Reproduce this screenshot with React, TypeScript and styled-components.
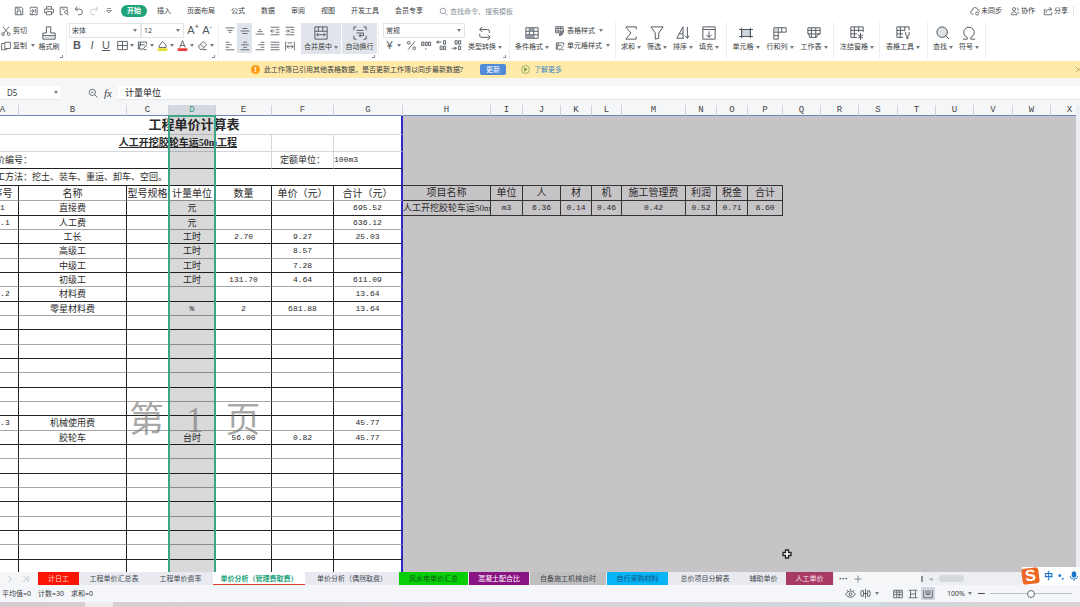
import React from 'react';
import styled, { createGlobalStyle, css } from 'styled-components';

const GlobalStyle = createGlobalStyle`
  * { box-sizing: border-box; }
  body {
    margin: 0;
    overflow: hidden;
    font: 7px/10px "Noto Sans", "Noto Sans CJK SC", sans-serif;
    color: #3a3d42;
    background: #f4f6f8;
  }
  button, input, select { font: inherit; color: inherit; }
  button { border: 0; padding: 0; margin: 0; background: none; white-space: nowrap; }
`;

/* ---------- icons ---------- */

const paths: Record<string, React.ReactNode> = {
  save: <path d="M2 2h10l2 2v10H2zM5 14V8h6v6M5 2v3h5" />,
  exportDoc: <path d="M2 5V2h11v12H5M1 8h7M5 5l3 3-3 3v3H2v-3M10 5v6" />,
  print: <path d="M4 5V1h8v4M4 11H1V5h14v6h-3M4 9h8v5H4z" />,
  preview: <path d="M6 14H2V2h11v5M5 5h4M9 10a2.500 2.500 0 1 0 5 0a2.500 2.500 0 1 0-5 0M13 12l2 3" />,
  undo: <path d="M5 1L2 5l4 3M2 5h7a4.500 4.500 0 0 1 0 9H6" />,
  redo: <path d="M11 1l3 4-4 3M14 5H7a4.500 4.500 0 0 0 0 9h3" />,
  more: <path d="M4 3h8M3 7h10l-5 5z" />,
  search: <path d="M2 7a5 5 0 1 0 10 0a5 5 0 1 0-10 0M11 11l4 4" />,
  find: <><circle cx="7" cy="7" r="6" fill="#dde1e5" /><path d="M11 11l4 4" /></>,
  zoomOut: <path d="M2 7a5 5 0 1 0 10 0a5 5 0 1 0-10 0M11 11l4 4M5 7h4" />,
  cloud: <path d="M6 13H4a3 3 0 0 1 0-6a4 4 0 0 1 8-1a3 3 0 0 1 3 3M9 12a2.500 2.500 0 1 0 5 0a2.500 2.500 0 1 0-5 0" />,
  people: <path d="M4 5a2.500 2.500 0 1 0 5 0a2.500 2.500 0 1 0-5 0M2 14c0-6 9-6 9 0zM11 3c3 1 3 4 1 5M12 11h3" />,
  share: <path d="M5 6H2v8h12v-4M5 11c0-5 3-6 8-6M10 2l4 3-4 3" />,
  cut: <path d="M3 1l8 10M13 1L5 11M1 13a2.200 2.200 0 1 0 4.400 0a2.200 2.200 0 1 0-4.400 0M10 13a2.200 2.200 0 1 0 4.400 0a2.200 2.200 0 1 0-4.400 0" />,
  copy: <path d="M6 2h9v10H6zM6 4H1v10h8v-2" />,
  painter: <><path d="M5 8V1h5v7h5v7H1V8zM1 11h14" /><path d="M2 12h12v2H2z" fill="#d5dade" stroke="none" /></>,
  borders: <path d="M1 2h14v12H1zM8 2v12M1 8h14" />,
  cellStyle: <path d="M8 13H2V3h12v3M2 7h9M5 3v4l-2 6M14 7l-5 6-2 2M10 14h4" />,
  fill: <><path d="M3 9l5-7 5 5v4H3z" /><path d="M1 12h14v4H1z" fill="#e6e02c" stroke="none" /></>,
  fontColor: <><path d="M4 11L8 1l4 10M5 8h6" /><path d="M1 12h14v4H1z" fill="#ee3b30" stroke="none" /></>,
  eraser: <path d="M2 9l7-7 5 5-7 7H5zM5 6l5 5M8 14h6" />,
  alignTop: <path d="M1 3h14M4 7h8M6 10h4" />,
  alignMiddle: <path d="M4 4h8M1 8h14M4 12h8" />,
  alignBottom: <path d="M6 6h4M4 9h8M1 13h14" />,
  indentLess: <path d="M1 2h14M9 6h6M9 10h6M1 14h14M7 8H1M4 5L1 8l3 3" />,
  indentMore: <path d="M1 2h14M9 6h6M9 10h6M1 14h14M1 8h6M4 5l3 3-3 3" />,
  left: <path d="M1 2h6M1 6h10M1 10h6M1 14h14" />,
  center: <path d="M5 2h6M2 6h12M5 10h6M1 14h14" />,
  right: <path d="M9 2h6M5 6h10M9 10h6M1 14h14" />,
  justify: <path d="M1 2h14M1 6h14M1 10h14M1 14h14" />,
  distribute: <path d="M1 1v14M15 1v14M4 3h8M3 9h10M6 6L3 9l3 3M10 6l3 3-3 3" />,
  merge: <path d="M1 1h14v14H1zM1 6h14M5 1v5M10 1v5M3 10h10M5 8l-2 2 2 2M11 8l2 2-2 2" />,
  wrap: <path d="M4 1H1v4M12 1h3v4M1 11v4h3M15 11v4h-3M4 5h8M4 8h8v3H7M9 9l-2 2 2 2" />,
  percent: <path d="M13 2L3 14M2 4a2 2 0 1 0 4 0a2 2 0 1 0-4 0M10 12a2 2 0 1 0 4 0a2 2 0 1 0-4 0" />,
  thousands: <path d="M1 3h3v5H1zM6 3h3v5H6zM11 3h3v5h-3zM7 12v2" />,
  decMore: <path d="M8 3H1M4 1L1 3l3 2M11 1h3v5h-3zM6 9h3v5H6zM11 9h3v5h-3z" />,
  decLess: <path d="M6 1h3v5H6zM11 1h3v5h-3zM11 9h3v5h-3zM1 12h7M5 10l3 2-3 2" />,
  convert: <path d="M5 1L2 4l3 3M2 4h9a2 2 0 0 1 2 2v2M2 9v2a2 2 0 0 0 2 2h9M11 10l3 3-3 3" />,
  conditional: <><path d="M1 2h14v12H1zM1 6h14M1 10h14M5 2v12M10 2v12" /><path d="M5 2h5v4H5zM1 10h9v4H1z" fill="#8f98a3" stroke="none" /></>,
  tableStyle: <><path d="M1 1h12v6M1 1v10h5M1 4h12M1 8h7M5 1v10M9 1v6" /><path d="M8 9l6-2-2 6-5 3z" fill="#7c858f" /></>,
  sum: <path d="M14 4V1H2l6 7-6 7h12v-3" />,
  filter: <path d="M1 1h14l-5 7v6l-4 1V8z" />,
  sort: <path d="M1 14L8 1v13M4 9h4M1 14h8M13 1v13M10 11l3 3 2-3" />,
  fillDown: <path d="M1 1h14v14H1zM1 4h14M8 6v7M5 10l3 3 3-3" />,
  cell: <><path d="M3 4h10v8H3z" fill="#d2d8df" /><path d="M3 2v12M13 2v12M0 4h16M0 12h16" /></>,
  rowcol: <><path d="M1 2h14v5H6v8H1zM6 2v5M10 2v5M1 7h5M1 11h5" /><path d="M2 3h3v3H2z" fill="#c9d0d7" stroke="none" /></>,
  sheet: <path d="M1 2h14v7l-3 1-1 3H3L2 9H1zM1 5h14M1 9h14M5 2v11M10 2v11" />,
  freeze: <><path d="M8 13H1V1h14v6M1 5h14M1 9h7M5 1v12M10 1v6" /><path d="M12 8v8M9 10l6 4M15 10l-6 4" /></>,
  tableTool: <path d="M8 13H1V1h14v4M1 5h9M1 9h7M5 1v12M10 1v5M11 7v3l1.500 1V15M15 7v3l-1.500 1V15" />,
  omega: <path d="M1 15h5v-2a6 6 0 1 1 4 0v2h5" />,
  play: <><circle cx="8" cy="8" r="7" /><path d="M6 5l5 3-5 3z" fill="#6bb34d" /></>,
  close: <path d="M2 2l12 12M14 2L2 14" />,
  next: <path d="M5 2l6 6-6 6" />,
  last: <path d="M3 2l6 6-6 6M12 2v12" />,
  plus: <path d="M8 1v14M1 8h14" />,
  eye: <path d="M1 9c4-6 10-6 14 0c-4 6-10 6-14 0M6 9a2 2 0 1 0 4 0a2 2 0 1 0-4 0M8 1v2M3 3l1 2M13 3l-1 2" />,
  move: <path d="M8 1v14M5 4v8H2l-1-4 1-4zM11 4v8h3l1-4-1-4zM5 8h6" />,
  gridView: <path d="M1 2h14v12H1zM1 5h14M1 9h14M6 2v12M10 2v12" />,
  readView: <path d="M1 2h14M1 14h14M4 2v12M12 2v12M4 8h8" />,
  pageView: <path d="M1 2v12h14V2M5 2v7h6V2M8 2v7" />,
  mic: <><rect x="5" y="1" width="6" height="9" rx="3" fill="currentColor" /><path d="M2 8a6 5 0 0 0 12 0M8 13v3" /></>,
};

const Svg = styled.svg<{ $size: number; $color?: string }>`
  width: ${p => p.$size}px;
  height: ${p => p.$size}px;
  flex: none;
  fill: none;
  stroke: currentColor;
  color: ${p => p.$color ?? '#50565e'};
`;

const Icon = ({ name, size = 10, color, weight = 1.3 }: { name: string; size?: number; color?: string; weight?: number }) => (
  <Svg viewBox="0 0 16 16" $size={size} $color={color} strokeWidth={weight} aria-hidden="true">{paths[name]}</Svg>
);

const CaretSvg = styled.svg`
  width: 4px;
  height: 3px;
  flex: none;
  fill: #777c83;
  margin-left: 2px;
`;
const Caret = () => <CaretSvg viewBox="0 0 4 3" aria-hidden="true"><path d="M0 0h4L2 3z" /></CaretSvg>;

/* ---------- shell ---------- */

const Window = styled.div`
  height: 100vh;
  display: flex;
  flex-direction: column;
  overflow: hidden;
`;

const MenuBar = styled.header`
  height: 22px;
  flex: none;
  display: flex;
  align-items: center;
  background: #fff;
`;
const QuickAccess = styled.div`
  display: flex;
  width: 118px;
  padding-left: 12px;
  gap: 1px;
`;
const QuickButton = styled.button`
  width: 14px;
  height: 14px;
  display: grid;
  place-items: center;
`;
const MenuTabs = styled.nav`
  display: flex;
  gap: 16px;
  align-items: center;
`;
const MenuTab = styled.button<{ $active?: boolean }>`
  height: 12px;
  ${p => p.$active && css`
    margin: 0 -6px 0 3px;
    padding: 0 6px;
    border-radius: 6px;
    background: #20a37a;
    color: #fff;
    font-weight: 700;
  `}
`;
const SearchLabel = styled.label`
  display: flex;
  align-items: center;
  gap: 2px;
  margin-left: 16px;
`;
const SearchInput = styled.input`
  width: 80px;
  height: 12px;
  padding: 0;
  border: 0;
  outline: 0;
  &::placeholder { color: #8a9199; opacity: 1; }
`;
const AccountTools = styled.div`
  display: flex;
  gap: 8px;
  margin-left: auto;
  margin-right: 6px;
  padding-right: 5px;
  border-right: 1px solid #e3e5e8;
`;
const AccountButton = styled.button`
  display: flex;
  align-items: center;
  gap: 1px;
`;

/* ---------- ribbon ---------- */

const Ribbon = styled.div`
  height: 39px;
  flex: none;
  display: flex;
  background: #fff;
  padding-bottom: 2px;
`;
const Group = styled.section<{ $w: number; $pad?: number }>`
  position: relative;
  flex: none;
  display: flex;
  align-items: flex-start;
  width: ${p => p.$w}px;
  padding: 1px 0 0 ${p => p.$pad ?? 2}px;
  border-right: 1px solid #eceef0;
`;
const Launcher = styled.i`
  position: absolute;
  right: 3px;
  bottom: 1px;
  width: 3px;
  height: 3px;
  border: solid #8a8f96;
  border-width: 0 1px 1px 0;
`;
const Stack = styled.div<{ $w: number; $indent?: number }>`
  width: ${p => p.$w}px;
  margin-left: ${p => p.$indent ?? 0}px;
  display: flex;
  flex-direction: column;
`;
const Line = styled.div`
  height: 15px;
  display: flex;
  align-items: center;
`;
const LineButton = styled.button`
  display: flex;
  align-items: center;
  gap: 2px;
  height: 15px;
`;
const Tool = styled.button<{ $w: number; $on?: boolean }>`
  display: flex;
  align-items: center;
  justify-content: center;
  width: ${p => p.$w}px;
  height: 15px;
  background: ${p => (p.$on ? '#dfe3ea' : 'transparent')};
`;
const Glyph = styled.span<{ $kind?: 'bold' | 'italic' | 'under' }>`
  font: 11px/13px "Liberation Sans", sans-serif;
  color: #555a61;
  font-weight: ${p => (p.$kind === 'bold' ? 700 : 400)};
  font-style: ${p => (p.$kind === 'italic' ? 'italic' : 'normal')};
  text-decoration: ${p => (p.$kind === 'under' ? 'underline' : 'none')};
`;
const Sup = styled.sup`
  font: 7px/7px "Liberation Sans", sans-serif;
  align-self: flex-start;
`;
const Picker = styled.div<{ $w: number }>`
  width: ${p => p.$w}px;
  height: 15px;
  display: flex;
  align-items: center;
  border: 1px solid #e1e4e8;
  padding-right: 3px;
`;
const Select = styled.select`
  flex: 1;
  min-width: 0;
  height: 13px;
  padding: 0 2px;
  border: 0;
  appearance: none;
  background: none;
  font-size: 7px;
`;
const Big = styled.button<{ $w: number; $on?: boolean }>`
  flex: none;
  width: ${p => p.$w}px;
  height: 31px;
  padding-top: 3px;
  display: flex;
  flex-direction: column;
  align-items: center;
  gap: 2px;
  background: ${p => (p.$on ? '#e1e5eb' : 'transparent')};
`;
const Label = styled.span`
  display: flex;
  align-items: center;
  line-height: 10px;
`;
const Spacer = styled.span<{ $w: number }>`
  flex: none;
  width: ${p => p.$w}px;
`;

const BigButton = ({ icon, label, w, on, caret = true }: { icon: string; label: string; w: number; on?: boolean; caret?: boolean }) => (
  <Big $w={w} $on={on}>
    <Icon name={icon} size={14} weight={1.1} />
    <Label>{label}{caret && <Caret />}</Label>
  </Big>
);

/* ---------- notice + formula bar ---------- */

const Notice = styled.div`
  height: 17px;
  flex: none;
  display: flex;
  align-items: center;
  padding: 0 0 0 251px;
  background: #ffeaa8;
`;
const Badge = styled.span`
  width: 9px;
  height: 9px;
  margin-right: 4px;
  border-radius: 50%;
  background: #fb9e17;
  color: #fff;
  text-align: center;
  font-weight: 700;
  line-height: 9px;
`;
const UpdateButton = styled.button`
  width: 26px;
  height: 11px;
  margin: 0 15px 0 17px;
  border-radius: 2px;
  background: #5089d6;
  color: #fff;
`;
const MoreLink = styled.a`
  display: flex;
  align-items: center;
  gap: 4px;
  color: #3f8ac4;
  text-decoration: none;
`;
const CloseButton = styled.button`
  margin-left: auto;
  margin-right: -2px;
  display: flex;
`;
const FormulaBar = styled.div`
  height: 27px;
  flex: none;
  display: flex;
  align-items: center;
  padding: 8px 0 5px;
  background: #f4f6f8;
`;
const NameBox = styled.div`
  width: 60px;
  height: 14px;
  display: flex;
  align-items: center;
  padding-right: 2px;
  background: #fff;
  border-bottom: 1px solid #e4e6e9;
`;
const NameInput = styled.input`
  flex: 1;
  min-width: 0;
  height: 12px;
  padding: 0 0 0 7px;
  border: 0;
  background: none;
  font-size: 8px;
`;
const FxTools = styled.div`
  width: 58px;
  display: flex;
  align-items: center;
  justify-content: flex-end;
  gap: 6px;
  padding-right: 6px;
`;
const Fx = styled.i`
  font: italic 11px/12px "Liberation Serif", serif;
`;
const FormulaInput = styled.input`
  flex: 1;
  min-width: 0;
  height: 14px;
  padding: 0 7px;
  border: 0;
  border-bottom: 1px solid #e4e6e9;
  background: #fff;
  color: #222;
  font-size: 9px;
`;

/* ---------- sheet ---------- */

const SheetArea = styled.main`
  position: relative;
  flex: 1;
  min-height: 0;
  overflow: hidden;
  background: #c7c4c7;
  border-right: 4px solid #eceef3;
`;
const Grid = styled.table`
  width: 1102px;
  margin-left: -13px;
  table-layout: fixed;
  border-collapse: separate;
  border-spacing: 0;
  font: 9px/12px "Liberation Serif", "Noto Sans CJK SC", serif;
  color: #2b2b2b;
`;
const ColHead = styled.th<{ $sel?: boolean }>`
  height: 11px;
  padding: 0;
  border-right: 1px solid #cfd2d8;
  border-bottom: 1px solid #7384bd;
  background: ${p => (p.$sel ? '#d6d8df' : '#f4f6f8')};
  color: ${p => (p.$sel ? '#2ba083' : '#444')};
  font: 9px/10px "Liberation Mono", monospace;
`;
const Row = styled.tr<{ $h: number }>`
  height: ${p => p.$h}px;
`;
type Rule = 'light' | 'gray' | 'dark';
const rule: Record<Rule, string> = { light: '#d5d6de', gray: '#a6a6a6', dark: '#222' };
const digits = css`font-family: "Liberation Mono", monospace; font-size: 8px;`;
const Cell = styled.td<{ $right?: Rule; $bottom?: Rule; $edge?: boolean; $digits?: boolean; $kind?: 'title' | 'subtitle' | 'head' | 'text' }>`
  padding: 0;
  overflow: hidden;
  white-space: nowrap;
  text-align: center;
  background: #fff;
  border-right: ${p => (p.$edge ? '2px solid #2b2bc4' : `1px solid ${rule[p.$right ?? 'dark']}`)};
  border-bottom: 1px solid ${p => rule[p.$bottom ?? 'dark']};
  ${p => p.$kind === 'title' && css`font-size: 13px; line-height: 18px; font-weight: 700;`}
  ${p => p.$kind === 'subtitle' && css`
    font-size: 10px; line-height: 14px; font-weight: 700; text-align: right; padding-right: 34px; text-decoration: underline;
  `}
  ${p => p.$kind === 'head' && css`font-size: 10px; line-height: 13px;`}
  ${p => p.$kind === 'text' && css`text-align: left;`}
  ${p => p.$digits && digits}
`;
const SideCell = styled.td<{ $head?: boolean; $digits?: boolean }>`
  padding: 0;
  overflow: hidden;
  white-space: nowrap;
  text-align: center;
  font-size: ${p => (p.$head ? 10 : 9)}px;
  border-right: 1px solid #333;
  border-bottom: 1px solid #333;
  ${p => p.$digits && digits}
`;
const SideTop = styled.td`
  padding: 0;
  border-bottom: 1px solid #333;
`;
/* The tint leaves a gap for the active cell of the selected column. */
const Selection = styled.div`
  position: absolute;
  left: 168px;
  top: 10px;
  bottom: 0;
  width: 48px;
  border: solid #3ca587;
  border-width: 2px 2px 0;
  background: linear-gradient(rgba(0, 0, 0, 0.15) 69px, transparent 69px 83px, rgba(0, 0, 0, 0.15) 83px);
`;
const Watermark = styled.div`
  position: absolute;
  left: 129px;
  top: 291px;
  display: flex;
  gap: 22px;
  font: 35px/50px "Liberation Serif", "Noto Sans CJK SC", serif;
  color: rgba(110, 110, 110, 0.6);
`;
const PlusCursor = styled.svg`
  position: absolute;
  left: 782px;
  top: 444px;
  width: 10px;
  height: 10px;
`;

const columns: [string, number][] = [
  ['A', 32], ['B', 108], ['C', 42], ['D', 47], ['E', 56], ['F', 62], ['G', 69], ['H', 88],
  ['I', 32], ['J', 38], ['K', 31], ['L', 30], ['M', 64], ['N', 31], ['O', 31], ['P', 35],
  ['Q', 38], ['R', 38], ['S', 39], ['T', 38], ['U', 38], ['V', 39], ['W', 38], ['X', 38],
];
const sideHead = ['项目名称', '单位', '人', '材', '机', '施工管理费', '利润', '税金', '合计'];
const sideData = ['人工开挖胶轮车运50m', 'm3', '6.36', '0.14', '0.46', '0.42', '0.52', '0.71', '8.60'];
const headings = ['序号', '名称', '型号规格', '计量单位', '数量', '单价（元）', '合计（元）'];

const blank = ['', '', '', '', '', '', ''];
const body: string[][] = [
  ['1', '直接费', '', '元', '', '', '695.52'],
  ['1.1', '人工费', '', '元', '', '', '636.12'],
  ['', '工长', '', '工时', '2.70', '9.27', '25.03'],
  ['', '高级工', '', '工时', '', '8.57', ''],
  ['', '中级工', '', '工时', '', '7.28', ''],
  ['', '初级工', '', '工时', '131.70', '4.64', '611.09'],
  ['1.2', '材料费', '', '', '', '', '13.64'],
  ['', '零星材料费', '', '%', '2', '681.88', '13.64'],
  ...Array(7).fill(blank),
  ['1.3', '机械使用费', '', '', '', '', '45.77'],
  ['', '胶轮车', '', '台时', '56.00', '0.82', '45.77'],
  ...Array(9).fill(blank),
];
const rowHeight = (i: number) => (i % 3 === 0 ? 15 : 14);
const isDigits = (s: string) => /^[\w.%]+$/.test(s);

/* ---------- bottom bars ---------- */

const TabStrip = styled.footer`
  position: relative;
  height: 13px;
  flex: none;
  display: flex;
  background: #e8eaef;
`;
const SheetNav = styled.div`
  width: 38px;
  flex: none;
  display: flex;
  align-items: center;
  gap: 8px;
  padding-left: 6px;
  background: #f4f6f8;
`;
const SheetTab = styled.button<{ $w: number; $bg?: string; $fg?: string; $active?: boolean }>`
  flex: none;
  width: ${p => p.$w}px;
  height: 13px;
  border-right: 1px solid #e8eaef;
  background: ${p => p.$bg ?? 'transparent'};
  color: ${p => p.$fg ?? '#444951'};
  ${p => p.$active && css`
    font-weight: 700;
    box-shadow: inset 0 -1px #e03c31;
  `}
`;
const TabTools = styled.div`
  display: flex;
  align-items: center;
  flex: 1;
  gap: 6px;
  padding-left: 5px;
  background: #f4f6f8;
`;
const Dots = styled.button`
  font: 700 9px/10px "Liberation Sans", sans-serif;
`;
const HScroll = styled.div`
  margin-left: auto;
  width: 159px;
  height: 13px;
  display: flex;
  align-items: center;
  gap: 6px;
  background: #eceef2;
  &::before { content: ''; width: 2px; height: 6px; background: #8c9198; }
`;
const ScrollArrow = styled.span`
  color: #a9adb3;
`;
const Thumb = styled.span`
  width: 25px;
  height: 7px;
  border-radius: 4px;
  background: #d5d8dd;
`;
const Ime = styled.aside`
  position: absolute;
  right: 0;
  bottom: 0;
  width: 58px;
  height: 18px;
  display: flex;
  align-items: center;
  gap: 5px;
  background: #fff;
  color: #1673c9;
  font-size: 9px;
  font-weight: 700;
`;
const ImeLogo = styled.span`
  flex: none;
  width: 17px;
  height: 16px;
  border-radius: 3px;
  background: #ee6724;
  color: #fff;
  font: 700 16px/16px "Liberation Sans", sans-serif;
  text-align: center;
  transform: rotate(-7deg);
`;
const StatusBar = styled.footer`
  height: 17px;
  flex: none;
  display: flex;
  align-items: center;
  padding-left: 2px;
  background: #f4f6f9;
`;
const Stats = styled.span`
  display: flex;
  gap: 7px;
  margin-right: auto;
`;
const ViewTools = styled.div`
  display: flex;
  align-items: center;
  gap: 1px;
  width: 237px;
`;
const ViewButton = styled.button<{ $on?: boolean }>`
  width: 14px;
  height: 13px;
  display: grid;
  place-items: center;
  background: ${p => (p.$on ? '#d0d5dd' : 'transparent')};
`;
const Zoom = styled.input`
  appearance: none;
  width: 82px;
  height: 9px;
  margin: 0 0 0 4px;
  background: linear-gradient(#b9c0cb, #b9c0cb) center / 100% 1px no-repeat;
  &::-webkit-slider-thumb {
    appearance: none;
    width: 8px;
    height: 8px;
    border: 1px solid #666c74;
    border-radius: 50%;
    background: #fff;
  }
`;
const Desktop = styled.div`
  height: 5px;
  flex: none;
  background: linear-gradient(90deg, #d6cdd4, #d9d0d6 30%, #e0d0da 42%, #d4d4d8 60%, #d0dadf 80%, #dcd0d2);
  &::before {
    content: '';
    display: block;
    width: 28px;
    height: 5px;
    margin-left: 85px;
    background: #eeeaee;
  }
`;

const quick = ['save', 'exportDoc', 'print', 'preview', 'undo', 'redo', 'more'];
const menus = ['插入', '页面布局', '公式', '数据', '审阅', '视图', '开发工具', '会员专享'];
const sheetTabs: { label: string; w: number; bg?: string; fg?: string; active?: boolean }[] = [
  { label: '计日工', w: 42, bg: '#fb1505', fg: '#ffd0c8' },
  { label: '工程单价汇总表', w: 69 },
  { label: '工程单价费率', w: 64 },
  { label: '单价分析（管理费取费）', w: 93, bg: '#fff', fg: '#20a37a', active: true },
  { label: '单价分析（偶然取费）', w: 93 },
  { label: '风水电单价汇总', w: 70, bg: '#08cf08', fg: '#0b5a14' },
  { label: '混凝土配合比', w: 61, bg: '#8a1483', fg: '#fff' },
  { label: '自备施工机械台时', w: 77, bg: '#bfbfbf' },
  { label: '自行采购材料', w: 62, bg: '#08b4f5', fg: '#12507c' },
  { label: '总价项目分解表', w: 73 },
  { label: '辅助单价', w: 44 },
  { label: '人工单价', w: 48, bg: '#a83b64', fg: '#fbe3ec' },
];

export default function App() {
  return (
    <Window lang="zh-CN">
      <GlobalStyle />
      <MenuBar>
        <QuickAccess>
          {quick.map(n => (
            <QuickButton key={n} aria-label={n}>
              <Icon name={n} size={n === 'more' ? 8 : 10} color={n === 'redo' ? '#c3c7cc' : undefined} />
            </QuickButton>
          ))}
        </QuickAccess>
        <MenuTabs>
          <MenuTab $active>开始</MenuTab>
          {menus.map(m => <MenuTab key={m}>{m}</MenuTab>)}
        </MenuTabs>
        <SearchLabel>
          <Icon name="search" size={9} color="#7c858f" />
          <SearchInput aria-label="查找命令" placeholder="查找命令、搜索模板" />
        </SearchLabel>
        <AccountTools>
          <AccountButton><Icon name="cloud" />未同步</AccountButton>
          <AccountButton><Icon name="people" />协作</AccountButton>
          <AccountButton><Icon name="share" />分享</AccountButton>
        </AccountTools>
      </MenuBar>

      <Ribbon>
        <Group $w={67} $pad={1}>
          <Stack $w={34}>
            <LineButton><Icon name="cut" />剪切</LineButton>
            <LineButton><Icon name="copy" />复制<Caret /></LineButton>
          </Stack>
          <BigButton icon="painter" label="格式刷" w={28} caret={false} />
          <Launcher />
        </Group>
        <Group $w={152}>
          <Stack $w={147}>
            <Line>
              <Picker $w={72}><Select aria-label="字体"><option>宋体</option></Select><Caret /></Picker>
              <Picker $w={43}><Select aria-label="字号"><option>12</option></Select><Caret /></Picker>
              <Spacer $w={2} />
              <Tool $w={14}><Glyph>A</Glyph><Sup>+</Sup></Tool>
              <Tool $w={14}><Glyph>A</Glyph><Sup>-</Sup></Tool>
            </Line>
            <Line>
              <Tool $w={16}><Glyph $kind="bold">B</Glyph></Tool>
              <Tool $w={14}><Glyph $kind="italic">I</Glyph></Tool>
              <Tool $w={14}><Glyph $kind="under">U</Glyph></Tool>
              <Spacer $w={2} />
              {['borders', 'cellStyle', 'fill', 'fontColor', 'eraser'].map(n => (
                <Tool key={n} $w={20} aria-label={n}><Icon name={n} size={11} /><Caret /></Tool>
              ))}
            </Line>
          </Stack>
          <Launcher />
        </Group>
        <Group $w={160} $pad={3}>
          <Stack $w={75}>
            <Line>
              {['alignTop', 'alignMiddle', 'alignBottom', 'indentLess', 'indentMore'].map((n, i) => (
                <Tool key={n} $w={15} $on={i === 1} aria-label={n}><Icon name={n} /></Tool>
              ))}
            </Line>
            <Line>
              {['left', 'center', 'right', 'justify', 'distribute'].map((n, i) => (
                <Tool key={n} $w={15} $on={i === 1} aria-label={n}><Icon name={n} /></Tool>
              ))}
            </Line>
          </Stack>
          <Spacer $w={4} />
          <BigButton icon="merge" label="合并居中" w={40} on />
          <Spacer $w={1} />
          <BigButton icon="wrap" label="自动换行" w={35} on caret={false} />
          <Launcher />
        </Group>
        <Group $w={131} $pad={4}>
          <Stack $w={82}>
            <Line>
              <Picker $w={82}><Select aria-label="数字格式"><option>常规</option></Select><Caret /></Picker>
            </Line>
            <Line>
              <Tool $w={21}><Glyph>¥</Glyph><Spacer $w={2} /><Caret /></Tool>
              {['percent', 'thousands', 'decMore', 'decLess'].map(n => (
                <Tool key={n} $w={15} aria-label={n}><Icon name={n} size={11} /></Tool>
              ))}
            </Line>
          </Stack>
          <BigButton icon="convert" label="类型转换" w={40} />
          <Launcher />
        </Group>
        <Group $w={106} $pad={1}>
          <BigButton icon="conditional" label="条件格式" w={42} />
          <Stack $w={58} $indent={2}>
            <LineButton><Icon name="tableStyle" />表格样式<Caret /></LineButton>
            <LineButton><Icon name="cellStyle" />单元格样式<Caret /></LineButton>
          </Stack>
        </Group>
        <Group $w={111}>
          <BigButton icon="sum" label="求和" w={26} />
          <BigButton icon="filter" label="筛选" w={26} />
          <BigButton icon="sort" label="排序" w={26} />
          <BigButton icon="fillDown" label="填充" w={26} />
        </Group>
        <Group $w={107}>
          <BigButton icon="cell" label="单元格" w={34} />
          <BigButton icon="rowcol" label="行和列" w={34} />
          <BigButton icon="sheet" label="工作表" w={34} />
        </Group>
        <Group $w={46}><BigButton icon="freeze" label="冻结窗格" w={42} /></Group>
        <Group $w={48}><BigButton icon="tableTool" label="表格工具" w={42} /></Group>
        <Group $w={58}>
          <BigButton icon="find" label="查找" w={26} />
          <BigButton icon="omega" label="符号" w={26} />
        </Group>
      </Ribbon>

      <Notice role="status">
        <Badge>!</Badge>
        此工作簿已引用其他表格数据，是否更新工作簿以同步最新数据?
        <UpdateButton>更新</UpdateButton>
        <MoreLink href="#more"><Icon name="play" size={9} color="#7d9a4a" />了解更多</MoreLink>
        <CloseButton aria-label="关闭"><Icon name="close" size={7} color="#8a8155" /></CloseButton>
      </Notice>

      <FormulaBar>
        <NameBox><NameInput aria-label="名称框" defaultValue="D5" /><Caret /></NameBox>
        <FxTools><Icon name="zoomOut" /><Fx>fx</Fx></FxTools>
        <FormulaInput aria-label="编辑栏" defaultValue="计量单位" />
      </FormulaBar>

      <SheetArea>
        <Grid>
          <colgroup>{columns.map(([n, w]) => <col key={n} width={w} />)}</colgroup>
          <thead>
            <tr>{columns.map(([n]) => <ColHead key={n} $sel={n === 'D'}>{n}</ColHead>)}</tr>
          </thead>
          <tbody>
            <Row $h={19}><Cell colSpan={7} $kind="title" $bottom="light" $edge>工程单价计算表</Cell></Row>
            <Row $h={17}>
              <Cell colSpan={5} $kind="subtitle" $right="light" $bottom="light">人工开挖胶轮车运50m工程</Cell>
              <Cell $right="light" $bottom="light" />
              <Cell $bottom="light" $edge />
            </Row>
            <Row $h={17}>
              <Cell colSpan={5} $kind="text" $right="light">单价编号：</Cell>
              <Cell $right="light">定额单位：</Cell>
              <Cell $kind="text" $digits $edge>100m3</Cell>
            </Row>
            <Row $h={17}>
              <Cell colSpan={7} $kind="text" $edge>施工方法：挖土、装车、重运、卸车、空回。</Cell>
              <SideTop colSpan={9} />
            </Row>
            <Row $h={15}>
              {headings.map((h, i) => <Cell key={h} $kind="head" $bottom="gray" $edge={i === 6}>{h}</Cell>)}
              {sideHead.map(h => <SideCell key={h} $head>{h}</SideCell>)}
            </Row>
            {body.map((cells, r) => (
              <Row key={r} $h={rowHeight(r)}>
                {cells.map((c, i) => (
                  <Cell key={i} $digits={isDigits(c)} $bottom={r % 2 ? 'gray' : 'dark'} $edge={i === 6}>{c}</Cell>
                ))}
                {r === 0 && sideData.map(s => <SideCell key={s} $digits={isDigits(s)}>{s}</SideCell>)}
              </Row>
            ))}
          </tbody>
        </Grid>
        <Selection />
        <Watermark><span>第</span><span>1</span><span>页</span></Watermark>
        <PlusCursor viewBox="0 0 10 10">
          <path d="M3.500 1h3v2.500H9v3H6.500V9h-3V6.500H1v-3h2.500z" fill="#fff" stroke="#222" strokeWidth="1.300" />
        </PlusCursor>
      </SheetArea>

      <TabStrip>
        <SheetNav><Icon name="next" size={8} color="#a3a8af" /><Icon name="last" size={8} color="#a3a8af" /></SheetNav>
        {sheetTabs.map(t => (
          <SheetTab key={t.label} $w={t.w} $bg={t.bg} $fg={t.fg} $active={t.active}>{t.label}</SheetTab>
        ))}
        <TabTools>
          <Dots aria-label="更多工作表">···</Dots>
          <Icon name="plus" size={8} />
          <HScroll><ScrollArrow>◂</ScrollArrow><Thumb /></HScroll>
        </TabTools>
        <Ime><ImeLogo>S</ImeLogo><span>中</span><span>•,</span><Icon name="mic" size={10} color="#1673c9" /></Ime>
      </TabStrip>

      <StatusBar>
        <Stats><span>平均值=0</span><span>计数=30</span><span>求和=0</span></Stats>
        <ViewTools>
          <ViewButton aria-label="护眼"><Icon name="eye" size={11} /></ViewButton>
          <ViewButton aria-label="阅读"><Icon name="move" size={11} /></ViewButton>
          <Caret />
          <Spacer $w={10} />
          <ViewButton aria-label="普通视图"><Icon name="gridView" /></ViewButton>
          <ViewButton aria-label="页面布局"><Icon name="readView" /></ViewButton>
          <ViewButton aria-label="分页预览" $on><Icon name="pageView" /></ViewButton>
          <Spacer $w={10} />
          <span>100%</span><Caret />
          <Spacer $w={4} />
          <span>━</span>
          <Zoom type="range" aria-label="缩放" min={0} max={100} defaultValue={50} />
        </ViewTools>
      </StatusBar>
      <Desktop />
    </Window>
  );
}
